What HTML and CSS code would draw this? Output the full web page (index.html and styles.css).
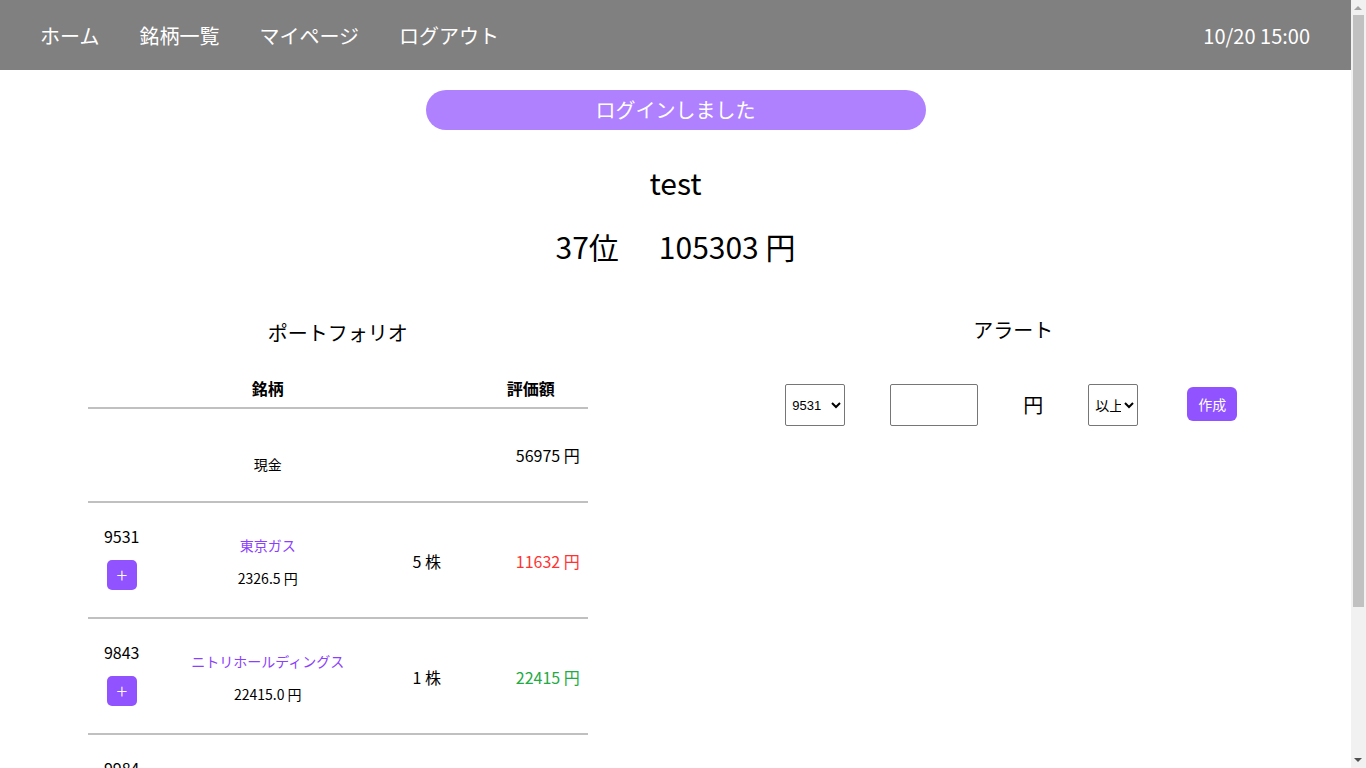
FILE: index.html
```html
<!DOCTYPE html>
<html lang="ja">
<head>
<meta charset="utf-8">
<title>マイページ</title>
<link rel="stylesheet" href="styles.css">
</head>
<body>
<div class="page">
<header class="nav">
  <nav class="nav-links">
    <a class="nav-link" href="#">ホーム</a>
    <a class="nav-link" href="#">銘柄一覧</a>
    <a class="nav-link" href="#">マイページ</a>
    <a class="nav-link" href="#">ログアウト</a>
  </nav>
  <div class="nav-time">10/20 15:00</div>
</header>
<main class="main">
  <div class="flash">ログインしました</div>
  <div class="username">test</div>
  <div class="stats"><span>37位</span><span>105303 円</span></div>
  <div class="columns">
    <section class="col col-left">
      <h2 class="col-title">ポートフォリオ</h2>
      <table class="pf">
        <colgroup><col class="c1"><col class="c2"><col class="c3"><col class="c4"></colgroup>
        <thead>
          <tr><th></th><th>銘柄</th><th></th><th>評価額</th></tr>
        </thead>
        <tbody>
          <tr class="row-cash">
            <td><div class="cell"></div></td>
            <td><div class="cell small cash-name">現金</div></td>
            <td><div class="cell"></div></td>
            <td><div class="cell right">56975 円</div></td>
          </tr>
          <tr>
            <td><div class="cell stack code"><span>9531</span><button class="plus">+</button></div></td>
            <td><div class="cell stack name"><a class="stock-link" href="#">東京ガス</a><span class="small">2326.5 円</span></div></td>
            <td><div class="cell shift">5 株</div></td>
            <td><div class="cell right shift loss">11632 円</div></td>
          </tr>
          <tr>
            <td><div class="cell stack code"><span>9843</span><button class="plus">+</button></div></td>
            <td><div class="cell stack name"><a class="stock-link" href="#">ニトリホールディングス</a><span class="small">22415.0 円</span></div></td>
            <td><div class="cell shift">1 株</div></td>
            <td><div class="cell right shift gain">22415 円</div></td>
          </tr>
          <tr>
            <td><div class="cell stack code"><span>9984</span><button class="plus">+</button></div></td>
            <td><div class="cell stack name"><a class="stock-link" href="#">ソフトバンクグループ</a><span class="small">7140.5 円</span></div></td>
            <td><div class="cell shift">2 株</div></td>
            <td><div class="cell right shift loss">14281 円</div></td>
          </tr>
        </tbody>
      </table>
    </section>
    <section class="col col-right">
      <h2 class="col-title">アラート</h2>
      <form class="alert-form">
        <select class="sel sel-code"><option>9531</option><option>9843</option><option>9984</option></select>
        <input class="price-input" type="text">
        <span class="yen">円</span>
        <select class="sel sel-cond"><option>以上</option><option>以下</option></select>
        <button class="create" type="button">作成</button>
      </form>
    </section>
  </div>
</main>
</div>
<div class="scrollbar" aria-hidden="true">
  <div class="sb-arrow sb-up"></div>
  <div class="sb-thumb"></div>
  <div class="sb-arrow sb-down"></div>
</div>
</body>
</html>
```
FILE: styles.css
```css
html, body {
  margin: 0;
  padding: 0;
}
body {
  font-family: "Noto Sans CJK JP", "Noto Sans", sans-serif;
  color: #000;
  background: #fff;
}
.page {
  width: calc(100% - 15px);
}
.nav {
  height: 70px;
  background: #808080;
  display: flex;
  align-items: center;
  justify-content: space-between;
  padding: 2px 41px 0 40px;
  box-sizing: border-box;
}
.nav-links {
  display: flex;
  gap: 40px;
}
.nav-link, .nav-time {
  color: #fff;
  text-decoration: none;
  font-size: 20px;
  line-height: 30px;
}
.main {
  padding-bottom: 104px;
}
.flash {
  width: 500px;
  height: 40px;
  margin: 20px auto 0;
  border-radius: 20px;
  background: #b081ff;
  color: #fff;
  font-size: 20px;
  line-height: 40px;
  text-align: center;
}
.username {
  margin-top: 32px;
  font-size: 30px;
  line-height: 40px;
  text-align: center;
}
.stats {
  margin-top: 22px;
  font-size: 30px;
  line-height: 44px;
  display: flex;
  justify-content: center;
  gap: 40px;
}
.columns {
  display: grid;
  grid-template-columns: 1fr 1fr;
}
.col-left {
  padding-top: 50px;
}
.col-right {
  padding-top: 47px;
}
.col-title {
  margin: 0;
  font-size: 20px;
  font-weight: normal;
  line-height: 30px;
  text-align: center;
}
.pf {
  width: 500px;
  margin: 20px auto 0;
  table-layout: fixed;
  border-collapse: separate;
  border-spacing: 0;
}
.c1 { width: 68px; }
.c2 { width: 224px; }
.c3 { width: 94px; }
.c4 { width: 114px; }
.pf th {
  font-size: 16px;
  font-weight: bold;
  line-height: 24px;
  padding: 8px 0 7px;
  border-bottom: 2px solid #c0c0c0;
  text-align: center;
}
.pf td {
  padding: 0;
  border-bottom: 2px solid #c0c0c0;
  font-size: 16px;
}
.cell {
  height: 114px;
  display: flex;
  align-items: center;
  justify-content: center;
  box-sizing: border-box;
  line-height: 24px;
}
.row-cash .cell {
  height: 92px;
}
.cell.right {
  justify-content: flex-end;
  padding-right: 8px;
}
.cash-name {
  padding-top: 18px;
}
.small {
  font-size: 14px;
  line-height: 20px;
}
.stack {
  flex-direction: column;
}
.code {
  gap: 12px;
  padding-bottom: 6px;
}
.name {
  gap: 13px;
  padding-top: 3px;
}
.shift {
  padding-top: 2px;
}
.loss {
  color: #ff3333;
}
.gain {
  color: #22aa44;
}
.stock-link {
  color: #8c40ff;
  text-decoration: none;
  font-size: 14px;
  line-height: 20px;
}
.plus {
  width: 30px;
  height: 30px;
  border: none;
  border-radius: 5px;
  background: #9152ff;
  color: #fff;
  font-family: "Noto Sans CJK JP", sans-serif;
  font-size: 20px;
  font-weight: 300;
  line-height: 30px;
  padding: 0;
}
.alert-form {
  margin-top: 39px;
  padding-right: 4px;
  display: flex;
  align-items: center;
  justify-content: center;
  gap: 45px;
}
.sel {
  height: 42px;
  font-family: "Liberation Sans", "Noto Sans CJK JP", sans-serif;
  font-size: 13px;
  border: 1px solid #767676;
  border-radius: 2px;
  background: #fff;
  color: #000;
  padding: 0 0 0 2px;
}
.sel-code { width: 60px; }
.sel-cond { width: 50px; font-family: "Noto Sans CJK JP", sans-serif; font-size: 14px; }
.price-input {
  width: 88px;
  height: 42px;
  box-sizing: border-box;
  border: 1px solid #767676;
  border-radius: 2px;
  padding: 0 4px;
}
.yen {
  font-size: 20px;
  line-height: 30px;
}
.create {
  width: 50px;
  height: 34px;
  border: none;
  border-radius: 6px;
  background: #9152ff;
  color: #fff;
  font-family: "Noto Sans CJK JP", sans-serif;
  font-size: 14px;
  padding: 0;
  margin-left: 4px;
  margin-top: -2px;
}
.scrollbar {
  position: fixed;
  top: 0;
  right: 0;
  width: 15px;
  height: 100vh;
  background: #f1f1f1;
}
.sb-thumb {
  position: absolute;
  top: 15px;
  left: 2px;
  width: 11px;
  height: 592px;
  background: #c1c1c1;
}
.sb-arrow {
  position: absolute;
  left: 3px;
  width: 0;
  height: 0;
  border-left: 4.5px solid transparent;
  border-right: 4.5px solid transparent;
}
.sb-up {
  top: 6px;
  border-bottom: 4px solid #a3a3a3;
}
.sb-down {
  bottom: 6px;
  border-top: 4px solid #505050;
}
```
